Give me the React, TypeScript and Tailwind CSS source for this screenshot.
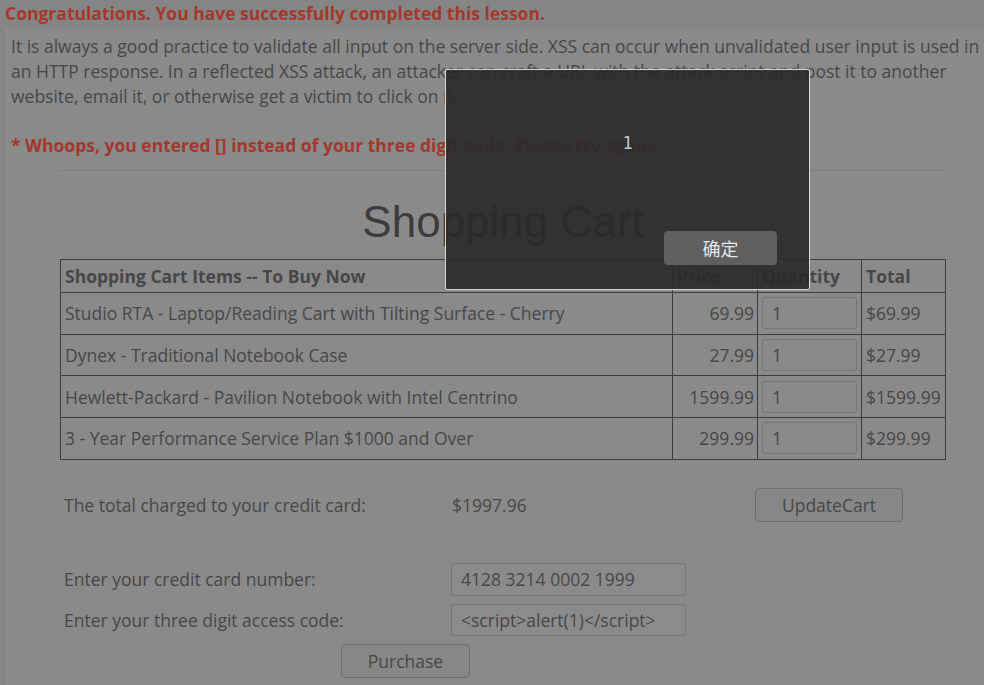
const items = [
  { name: "Studio RTA - Laptop/Reading Cart with Tilting Surface - Cherry", price: "69.99", total: "$69.99" },
  { name: "Dynex - Traditional Notebook Case", price: "27.99", total: "$27.99" },
  { name: "Hewlett-Packard - Pavilion Notebook with Intel Centrino", price: "1599.99", total: "$1599.99" },
  { name: "3 - Year Performance Service Plan $1000 and Over", price: "299.99", total: "$299.99" },
];

const Field = ({ value }: { value: string }) => (
  <div className="flex h-full w-[235px] items-center rounded-[3px] border border-[#777777] bg-[#8b8b8b] px-[9px] text-[#474747]">
    {value}
  </div>
);

const Btn = ({ children, className }: { children: React.ReactNode; className?: string }) => (
  <div
    className={`flex items-center justify-center rounded-[4px] border border-[#6f6f6f] bg-[#878787] text-[#484848] ${className ?? ""}`}
  >
    {children}
  </div>
);

const AlertBox = () => (
  <div className="absolute left-[445px] top-[69px] h-[221px] w-[365px] rounded-[2px] border border-[#d9d9d9] bg-[#2a2a2a]/[0.92]">
    <div className="mt-[62px] text-center font-['DejaVu_Sans_Mono',monospace] text-[17px] leading-[22px] text-[#c4c4c4]">1</div>
    <div className="absolute bottom-[24px] right-[32px] flex h-[34px] w-[113px] items-center justify-center rounded-[4px] bg-[#5f5f5f] font-['Noto_Sans_CJK_SC',sans-serif] text-[18px] text-[#e6e6e6]">
      确定
    </div>
  </div>
);

export default function App() {
  return (
    <div className="relative h-[685px] w-[984px] overflow-hidden bg-[#858585] font-['Open_Sans',sans-serif] text-[17.5px] text-[#474747]">
      <div className="flex h-[27px] items-center pl-[5px] font-bold text-[#a5372c]">
        Congratulations. You have successfully completed this lesson.
      </div>
      <div className="ml-[5px] h-[658px] bg-[#8a8a8a] pl-[6px] pt-[7px]">
        <p className="leading-[24.8px]">
          It is always a good practice to validate all input on the server side. XSS can occur when unvalidated user input is used in an HTTP response. In a reflected XSS attack, an attacker can craft a URL with the attack script and post it to another website, email it, or otherwise get a victim to click on it.
          <br />
          <br />
          <span className="font-bold text-[#a5372c]">* Whoops, you entered [] instead of your three digit code. Please try again.</span>
        </p>
        <div className="ml-[49px] w-[886px]">
          <div className="mt-[12px] h-px bg-[#7d7d7d]" />
          <h1 className="mt-[26px] text-center font-['Liberation_Sans',Arial,sans-serif] text-[44px] leading-[50px] text-[#3b3b3b]">
            Shopping Cart
          </h1>
          <table className="mt-[12px] w-[886px] border-collapse border border-[#3c3c3c]">
            <thead>
              <tr className="h-[33px] font-bold">
                <th className="border border-[#3c3c3c] px-[4px] text-left">Shopping Cart Items -- To Buy Now</th>
                <th className="w-[85px] border border-[#3c3c3c] px-[4px] text-left">Price</th>
                <th className="w-[104px] border border-[#3c3c3c] px-[4px] text-left">Quantity</th>
                <th className="w-[84px] border border-[#3c3c3c] px-[4px] text-left">Total</th>
              </tr>
            </thead>
            <tbody>
              {items.map((it) => (
                <tr key={it.name} className="h-[41.7px]">
                  <td className="border border-[#3c3c3c] px-[4px]">{it.name}</td>
                  <td className="border border-[#3c3c3c] pr-[3px] text-right">{it.price}</td>
                  <td className="border border-[#3c3c3c] px-[4px]">
                    <div className="flex h-[32px] w-[95px] items-center rounded-[3px] border border-[#767676] pl-[9px]">1</div>
                  </td>
                  <td className="border border-[#3c3c3c] px-[4px]">{it.total}</td>
                </tr>
              ))}
            </tbody>
          </table>
          <div className="mt-[28px] grid grid-cols-[387px_304px_1fr] pl-[4px]">
            <div className="flex h-[34px] items-center">The total charged to your credit card:</div>
            <div className="flex h-[34px] items-center pl-[1px]">$1997.96</div>
            <Btn className="h-[34px] w-[148px]">UpdateCart</Btn>
          </div>
          <div className="mt-[41px] grid grid-cols-[387px_1fr] gap-y-[8px] pl-[4px]">
            <div className="flex h-[33px] items-center">Enter your credit card number:</div>
            <div className="h-[33px]">
              <Field value="4128 3214 0002 1999" />
            </div>
            <div className="flex h-[32px] items-center">Enter your three digit access code:</div>
            <div className="h-[32px]">
              <Field value="<script>alert(1)</script>" />
            </div>
          </div>
          <Btn className="ml-[281px] mt-[8px] h-[34px] w-[129px]">Purchase</Btn>
        </div>
      </div>
      <AlertBox />
    </div>
  );
}
